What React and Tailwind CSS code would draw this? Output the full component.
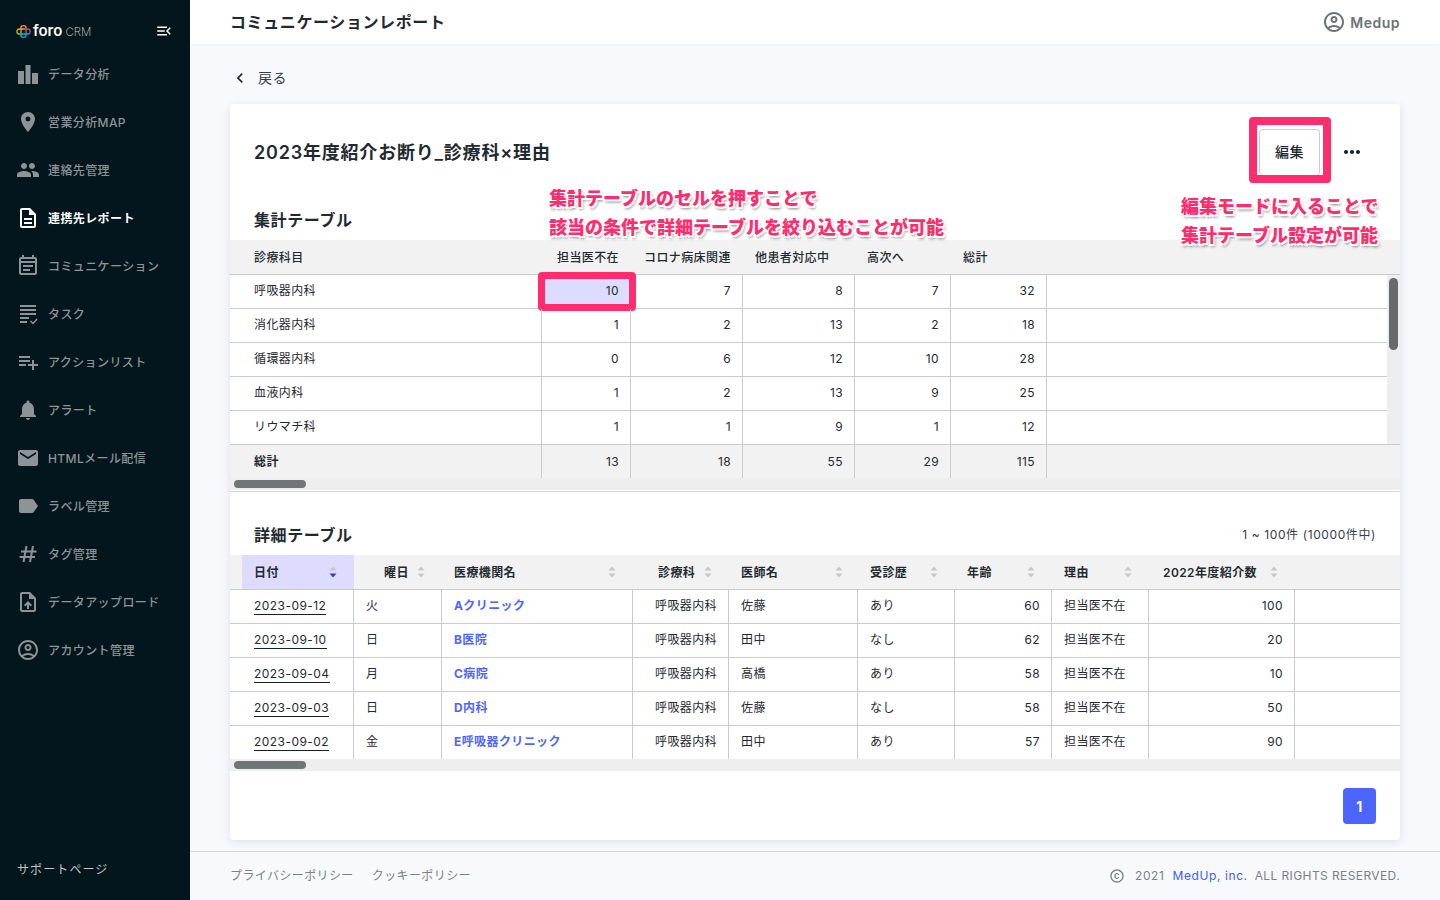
import React from "react";
import {
  MdPlace, MdPeople, MdOutlineDescription, MdOutlineEventNote, MdPlaylistAdd, MdNotifications,
  MdEmail, MdLabel, MdOutlineUploadFile, MdOutlineAccountCircle, MdMenuOpen,
  MdChevronLeft, MdMoreHoriz, MdOutlineCopyright,
} from "react-icons/md";

const font = "font-['Inter','Noto_Sans_CJK_JP',sans-serif]";

function BarsIcon() {
  return (
    <svg width="24" height="24" viewBox="0 0 24 24" fill="currentColor">
      <path d="M2 9h6v13H2zM9.500 3h5v19h-5zM16 11h6v11h-6z" />
    </svg>
  );
}
function TaskIcon() {
  return (
    <svg width="24" height="24" viewBox="0 0 24 24" fill="none" stroke="currentColor" strokeWidth="2">
      <path d="M4 4h16M4 8h16M4 12h16M4 16h9M4 20h7" />
      <path d="M14.500 19l2.500 2.500 4-4.500" strokeWidth="1.500" />
    </svg>
  );
}
function HashIcon() {
  return (
    <svg width="24" height="24" viewBox="0 0 24 24" fill="none" stroke="currentColor" strokeWidth="2">
      <path d="M10.500 4L7.500 20M17 4L14 20M5 9.500H20.500M3.500 15H19" />
    </svg>
  );
}
function Logo() {
  return (
    <svg width="15" height="15" viewBox="0 0 15 15" fill="none" strokeWidth="1.300" strokeLinecap="round">
      <path d="M5 8.500V3.500C5 1 10 1 10 3.500" stroke="#f5a623" />
      <path d="M8.500 5H3C0.300 5 0.300 10 3 10" stroke="#f5a623" />
      <path d="M10 3.500V5.500M8.500 5H12C14.700 5 14.700 9 13 9.800" stroke="#e8473f" />
      <path d="M3 10H6.500M5 8.500V11.500" stroke="#3fb950" />
      <path d="M5 11.500C5 14 10 14 10 11.500V6.500M6.500 10H12C12.500 10 13 10 13 9.800" stroke="#1ea7e1" />
    </svg>
  );
}

function Sort({ active }) {
  return (
    <svg width="8" height="12" viewBox="0 0 8 12" className="shrink-0">
      <path d="M4 0.500 L7.500 4.500 H0.500 Z" fill="#c4c7c9" />
      <path d="M4 11.500 L7.500 7.500 H0.500 Z" fill={active ? "#2f3fd0" : "#c4c7c9"} />
    </svg>
  );
}

const nav = [
  ["データ分析", <BarsIcon />],
  ["営業分析MAP", <MdPlace size={24} />],
  ["連絡先管理", <MdPeople size={24} />],
  ["連携先レポート", <MdOutlineDescription size={24} />, true],
  ["コミュニケーション", <MdOutlineEventNote size={24} />],
  ["タスク", <TaskIcon />],
  ["アクションリスト", <MdPlaylistAdd size={24} />],
  ["アラート", <MdNotifications size={24} />],
  ["HTMLメール配信", <MdEmail size={24} />],
  ["ラベル管理", <MdLabel size={24} />],
  ["タグ管理", <HashIcon />],
  ["データアップロード", <MdOutlineUploadFile size={24} />],
  ["アカウント管理", <MdOutlineAccountCircle size={24} />],
];

const t1cols = [312, 89, 112, 112, 96, 96];
const t1head = ["診療科目", "担当医不在", "コロナ病床関連", "他患者対応中", "高次へ", "総計"];
const t1pl = ["pl-6", "pl-[15px]", "pl-[13px]", "pl-[12px]", "pl-[12px]", "pl-[12px]"];
const t1rows = [
  ["呼吸器内科", 10, 7, 8, 7, 32],
  ["消化器内科", 1, 2, 13, 2, 18],
  ["循環器内科", 0, 6, 12, 10, 28],
  ["血液内科", 1, 2, 13, 9, 25],
  ["リウマチ科", 1, 1, 9, 1, 12],
];
const t1total = ["総計", 13, 18, 55, 29, 115];

const t2head = [
  ["日付", 112, "pl-3 pr-[17px]", true],
  ["曜日", 88, "pl-[30px] pr-[17px]"],
  ["医療機関名", 191, "pl-3 pr-[17px]"],
  ["診療科", 96, "pl-[25px] pr-[17px]"],
  ["医師名", 129, "pl-3 pr-[15px]"],
  ["受診歴", 97, "pl-3 pr-[17px]"],
  ["年齢", 97, "pl-3 pr-[17px]"],
  ["理由", 97, "pl-3 pr-[17px]"],
  ["2022年度紹介数", 146, "pl-3.5 pr-[17px]"],
];
const t2rows = [
  ["2023-09-12", "火", "Aクリニック", "呼吸器内科", "佐藤", "あり", 60, "担当医不在", 100],
  ["2023-09-10", "日", "B医院", "呼吸器内科", "田中", "なし", 62, "担当医不在", 20],
  ["2023-09-04", "月", "C病院", "呼吸器内科", "高橋", "あり", 58, "担当医不在", 10],
  ["2023-09-03", "日", "D内科", "呼吸器内科", "佐藤", "なし", 58, "担当医不在", 50],
  ["2023-09-02", "金", "E呼吸器クリニック", "呼吸器内科", "田中", "あり", 57, "担当医不在", 90],
];
const t2w = [124, 88, 191, 96, 129, 97, 97, 97, 146];

const note = "absolute whitespace-nowrap text-[18px] font-black leading-[29px] tracking-normal text-[#ff2d6e] [text-shadow:1.5px_1.5px_0_#fff,-1.5px_-1.5px_0_#fff,1.5px_-1.5px_0_#fff,-1.5px_1.5px_0_#fff,1.5px_3px_3px_rgba(0,0,0,0.5)]";

function HScroll() {
  return (
    <div className="h-3 bg-[#eeeeee] flex items-center pl-1">
      <div className="w-[72px] h-2 rounded-full bg-[#707578]" />
    </div>
  );
}

export default function App() {
  return (
    <div className={`${font} flex h-screen w-[1440px] overflow-hidden bg-[#f8f9fd] text-[12px] tracking-[0.4px] text-[#1f2a30]`}>
      <aside className="w-[190px] shrink-0 bg-[#04161d] flex flex-col">
        <div className="h-[50px] pt-[23px] pl-[16px] pr-[17px] flex items-start justify-between text-white">
          <div className="flex items-center h-4">
            <Logo />
            <span className="ml-[2px] text-[15px] font-semibold tracking-normal leading-4">foro</span>
            <span className="ml-[3px] text-[11.5px] font-extralight tracking-normal text-[#d4d7d8] leading-4 mt-[1px]">CRM</span>
          </div>
          <MdMenuOpen size={18} className="-mt-[1px]" />
        </div>
        <nav className="flex-1">
          {nav.map(([label, icon, active]) => (
            <div key={label} className={`h-12 flex items-center pl-4 ${active ? "text-white font-bold" : "text-[#8d9396] font-medium"}`}>
              <span className="w-6 h-6 mr-2 flex items-center justify-center">{icon}</span>
              <span className="pt-[2px]">{label}</span>
            </div>
          ))}
        </nav>
        <div className="h-[62px] pl-[17px] pt-[23px] text-[#c3c7c9] tracking-[1.1px]">サポートページ</div>
      </aside>

      <div className="flex-1 flex flex-col min-w-0">
        <header className="h-11 shrink-0 bg-white flex items-center justify-between pl-10 pr-10 shadow-[0_1px_3px_rgba(0,0,0,0.03)]">
          <h1 className="text-[16px] font-bold tracking-[0.6px]">コミュニケーションレポート</h1>
          <div className="flex items-center text-[#6b7478]">
            <MdOutlineAccountCircle size={24} />
            <span className="ml-[4px] text-[14px] font-semibold tracking-[0.5px]">Medup</span>
          </div>
        </header>

        <main className="flex-1 px-10 min-h-0">
          <div className="h-[60px] flex items-center text-[14px] pt-[8px]">
            <MdChevronLeft size={20} className="mr-[8px]" />
            <span className="text-[#33404a] pb-[2px]">戻る</span>
          </div>

          <section className="relative h-[736px] bg-white rounded shadow-[0_2px_8px_rgba(30,40,80,0.12)]">
            <div className="relative h-24 flex items-center justify-between pl-6 pr-9">
              <h2 className="text-[18px] font-semibold tracking-[0.8px]">2023年度紹介お断り_診療科×理由</h2>
              <div className="flex items-center">
                <div className="relative w-[61px] h-[47px] pb-[2px] rounded border border-[#c9cccc] flex items-center justify-center text-[14px] font-medium tracking-[0.6px]">
                  編集
                  <div className="absolute -left-[11px] -top-[13px] w-[82px] h-[66px] rounded border-[8px] border-[#ff2d6e]" />
                </div>
                <MdMoreHoriz size={24} className="ml-[20px] text-[#10212a]" />
              </div>
            </div>

            <div className="h-10 flex items-center pl-6 text-[16px] font-semibold tracking-[0.6px]">集計テーブル</div>

            <div className="flex h-[35px] bg-[#f2f2f2] border-b border-[#c9cccc] font-medium pt-[1px]">
              {t1head.map((h, i) => (
                <div key={h} style={{ width: t1cols[i] }} className={`${t1pl[i]} flex items-center whitespace-nowrap`}>{h}</div>
              ))}
            </div>
            <div className="flex">
              <div className="w-[1157px]">
                {t1rows.map((r, ri) => (
                  <div key={ri} className={`flex ${ri < 4 ? "h-[34px] border-b" : "h-[33px]"} border-[#c9cccc]`}>
                    {r.map((c, i) => (
                      <div
                        key={i}
                        style={{ width: t1cols[i] }}
                        className={`relative flex items-center pb-[2px] border-r border-[#c9cccc] ${i === 0 ? "pl-6" : "justify-end pr-[11px]"} ${ri === 0 && i === 1 ? "bg-[#dddcff]" : ""}`}
                      >
                        {c}
                        {ri === 0 && i === 1 && (
                          <div className="absolute -left-[4px] -top-[3px] w-[98px] h-[39px] rounded border-[7px] border-[#ff2d6e]" />
                        )}
                      </div>
                    ))}
                  </div>
                ))}
              </div>
              <div className="w-[13px] bg-[#eeeeee] pt-[3px] pl-[2px]">
                <div className="w-[9px] h-[72px] rounded-full bg-[#666a6c]" />
              </div>
            </div>
            <div className="flex h-[34px] bg-[#f2f2f2] border-t border-[#c9cccc]">
              {t1total.map((c, i) => (
                <div
                  key={i}
                  style={{ width: t1cols[i] }}
                  className={`flex items-center border-r border-[#c9cccc] ${i === 0 ? "pl-6 font-bold" : "justify-end pr-[11px]"}`}
                >
                  {c}
                </div>
              ))}
            </div>
            <HScroll />
            <div className="border-b border-[#d5d7d8] h-[2px]" />

            <div className="h-[63px] flex items-end justify-between pl-6 pr-6 pb-[10px]">
              <span className="text-[16px] font-semibold leading-5 tracking-[0.6px]">詳細テーブル</span>
              <span className="tracking-[0.6px] leading-5 text-[#33404a]">1 ~ 100件 (10000件中)</span>
            </div>

            <div className="flex h-[35px] pl-3 bg-[#f2f2f2] border-b border-[#c9cccc] font-medium">
              {t2head.map(([h, w, pad, active]) => (
                <div key={h} style={{ width: w }} className={`${pad} ${active ? "bg-[#dddcff]" : ""} flex items-center justify-between whitespace-nowrap font-semibold`}>
                  <span className="pt-[2px]">{h}</span>
                  <Sort active={active} />
                </div>
              ))}
            </div>
            {t2rows.map((r, ri) => (
              <div key={ri} className={`flex ${ri < 4 ? "h-[34px] border-b" : "h-[33px]"} border-[#c9cccc]`}>
                {r.map((c, i) => (
                  <div
                    key={i}
                    style={{ width: t2w[i] }}
                    className={`flex items-center pb-[2px] border-r border-[#c9cccc] whitespace-nowrap ${i === 0 ? "pl-6" : i === 6 || i === 8 ? "justify-end pr-[11px]" : i === 3 ? "pl-[22px]" : "pl-3"} ${i === 2 ? "text-[#4d65ff] font-bold" : ""}`}
                  >
                    {i === 0 ? <span className="border-b border-[#10212a] tracking-[0.45px] leading-[17px]">{c}</span> : c}
                  </div>
                ))}
              </div>
            ))}
            <HScroll />

            <div className="flex justify-end pr-6 pt-[17px]">
              <div className="w-[33px] h-9 rounded bg-[#4d65ff] text-white text-[14px] font-bold flex items-center justify-center">1</div>
            </div>

            <div className={`${note} left-[319px] top-[80px]`}>
              集計テーブルのセルを押すことで<br />該当の条件で詳細テーブルを絞り込むことが可能
            </div>
            <div className={`${note} left-[951px] top-[88px]`}>
              編集モードに入ることで<br />集計テーブル設定が可能
            </div>
          </section>
        </main>

        <footer className="h-[49px] shrink-0 border-t border-[#d5d7d8] flex items-center justify-between px-10 text-[#7b8185]">
          <div className="flex gap-[18px]">
            <span>プライバシーポリシー</span>
            <span>クッキーポリシー</span>
          </div>
          <div className="flex items-center tracking-[0.6px]">
            <MdOutlineCopyright size={16} className="mr-[10px]" />
            <span>2021</span>
            <span className="ml-2 text-[#3f5cf5]">MedUp, inc.</span>
            <span className="ml-[7px] tracking-[0.4px]">ALL RIGHTS RESERVED.</span>
          </div>
        </footer>
      </div>
    </div>
  );
}
